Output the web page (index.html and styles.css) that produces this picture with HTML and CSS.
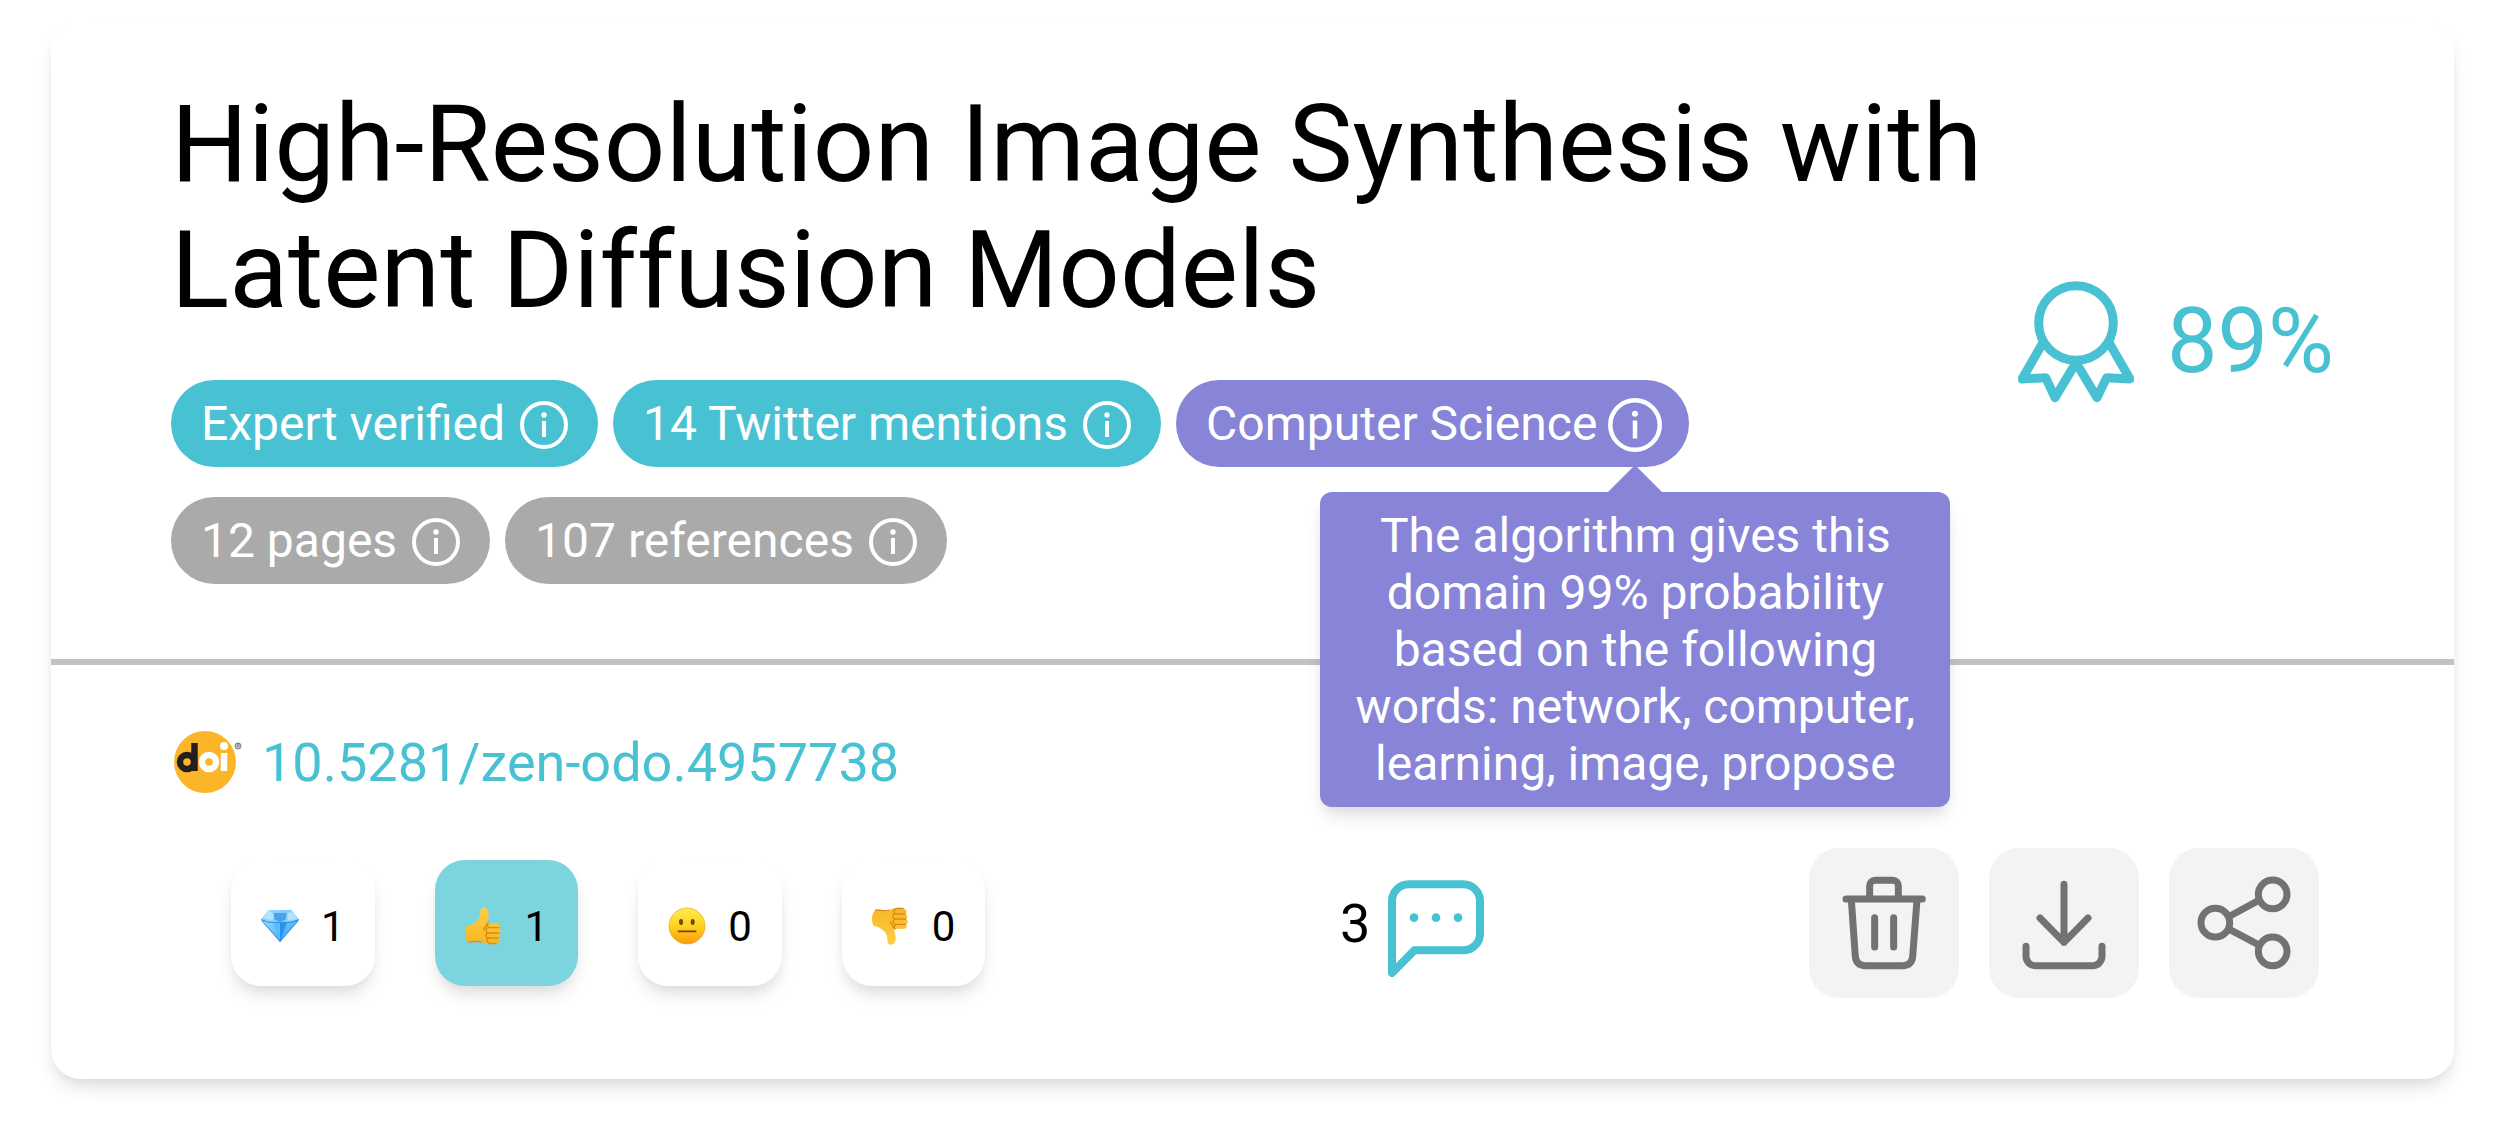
FILE: index.html
```html
<!DOCTYPE html>
<html lang="en">
<head>
<meta charset="utf-8">
<title>High-Resolution Image Synthesis with Latent Diffusion Models</title>
<link rel="stylesheet" href="styles.css">
</head>
<body>
<svg class="defs" aria-hidden="true">
  <defs>
    <linearGradient id="gem" x1="0" y1="0" x2="1" y2="1"><stop offset="0" stop-color="#a5e0ff"/><stop offset=".5" stop-color="#6cc3fb"/><stop offset="1" stop-color="#2a93ec"/></linearGradient>
    <linearGradient id="hand" x1="0" y1="0" x2="0" y2="1"><stop offset="0" stop-color="#ffcf45"/><stop offset="1" stop-color="#f8b526"/></linearGradient>
    <linearGradient id="face" x1="0" y1="0" x2="0" y2="1"><stop offset="0" stop-color="#ffec50"/><stop offset=".5" stop-color="#ffd21f"/><stop offset="1" stop-color="#f99a0e"/></linearGradient>
    <symbol id="info" viewBox="0 0 48 48">
      <circle cx="24" cy="24" r="22" fill="none" stroke="currentColor" stroke-width="4"/>
      <circle cx="24" cy="14" r="2.700" fill="currentColor"/>
      <path d="M24 20V36" stroke="currentColor" stroke-width="4"/>
    </symbol>
  </defs>
</svg>
<article class="card">
  <header class="summary">
    <div class="intro">
      <h1 class="title">High-Resolution Image Synthesis with Latent Diffusion Models</h1>
      <ul class="tags">
        <li class="tag verified">Expert verified <svg class="info"><use href="#info"/></svg></li>
        <li class="tag verified">14 Twitter mentions <svg class="info"><use href="#info"/></svg></li>
        <li class="tag domain">Computer Science
          <span class="hint"><svg class="info active"><use href="#info"/></svg>
            <span class="tooltip" role="tooltip">The algorithm gives this domain 99% probability based on the following words: network, computer, learning, image, propose</span>
          </span>
        </li>
        <li class="tag">12 pages <svg class="info"><use href="#info"/></svg></li>
        <li class="tag">107 references <svg class="info"><use href="#info"/></svg></li>
      </ul>
    </div>
    <div class="score">
      <svg class="award" viewBox="114 114 348 369" fill="none" stroke="currentColor" stroke-width="27" stroke-linecap="round" stroke-linejoin="round">
        <circle cx="288" cy="243" r="112"/>
        <path d="M187 305 126 411 197 407 225 467 288 362 351 467 380 407 450 411 389 305"/>
      </svg>
      <span>89%</span>
    </div>
  </header>
  <div class="details">
    <a class="doi" href="#doi">
      <svg class="doi-logo" viewBox="0 0 70 63">
        <circle cx="31" cy="31" r="31" fill="#fab528"/>
        <g fill="none" stroke-width="6.500">
          <circle cx="13" cy="31" r="7" stroke="#231f20"/><path d="M20.500 12V40" stroke="#231f20"/>
          <circle cx="35" cy="31" r="7" stroke="#fff"/><path d="M50 22V40" stroke="#fff"/>
        </g>
        <circle cx="50" cy="15" r="4" fill="#fff"/>
        <circle cx="64" cy="15" r="3" fill="none" stroke="#555" stroke-width=".8"/>
        <path d="M63 17v-4h1.500a1 1 0 0 1 0 2H63m1.500 0 1 2" fill="none" stroke="#555" stroke-width=".8"/>
      </svg>
      10.5281/zen-odo.4957738
    </a>
    <div class="toolbar">
      <div class="reactions">
        <button class="reaction" aria-label="Brilliant">
          <svg class="emoji" viewBox="0 0 114 114">
            <path d="M23 9H91L114 38 57 106 0 38Z" fill="url(#gem)"/>
            <path d="M23 9 36 18H77L91 9 114 38 78 45H36L0 38Z" fill="#8fd3ff"/>
            <path d="M36 18H77L74 38 57 45 41 38Z" fill="#4aa5e8"/>
            <path d="M36 45H78L57 106Z" fill="#58baff"/><path d="M57 45H78L57 106Z" fill="#2495f2"/>
            <path d="M0 38 24 46H90L114 38" fill="none" stroke="#3290d8" stroke-width="3"/>
            <path d="M3 42 57 103 111 42" fill="none" stroke="#3189cf" stroke-width="3"/>
            <path d="M23 9 8 34 33 40 39 22ZM80 18 98 16 108 35 82 40Z" fill="#b4e4ff"/>
          </svg>1</button>
        <button class="reaction selected" aria-label="Like" aria-pressed="true">
          <svg class="emoji" viewBox="0 0 114 114"><g id="thumb">
            <path d="M4 58C18 55 37 48 45 28L47 7C50-3 66-1 70 12 74 27 66 39 66 49L93 48C106 48 107 60 100 62 110 64 109 76 101 78 109 81 107 91 99 92 107 96 104 104 98 108 83 116 60 111 46 102L10 106C-2 95-2 70 4 58Z" fill="url(#hand)"/>
            <path d="M67 49C64 58 58 60 56 69M101 62H72C65 57 65 51 70 48M102 78H68C61 74 62 65 69 62M99 93H68C60 90 60 82 67 78M70 93C62 98 67 108 75 110H94M12 105C30 105 38 100 50 105" fill="none" stroke="#dc8b12" stroke-width="4" stroke-linecap="round"/>
          </g></svg>1</button>
        <button class="reaction" aria-label="Neutral">
          <svg class="emoji" viewBox="0 0 114 114">
            <circle cx="57" cy="57" r="54" fill="url(#face)" stroke="#eda016" stroke-width="2"/>
            <ellipse cx="39" cy="45" rx="6" ry="9" fill="#764506"/><ellipse cx="74" cy="45" rx="6" ry="9" fill="#764506"/>
            <path d="M31 73H83" stroke="#764506" stroke-width="5" stroke-linecap="round"/>
          </svg>0</button>
        <button class="reaction" aria-label="Dislike">
          <svg class="emoji" viewBox="0 0 114 114"><g transform="matrix(1 0 0 -1 0 114)"><use href="#thumb"/></g></svg>0</button>
      </div>
      <button class="comments" aria-label="3 comments">3
        <svg class="bubble" viewBox="258 117 288 291" fill="none" stroke="currentColor" stroke-width="24" stroke-linejoin="round">
          <path d="M270 396V180a50 50 0 0 1 50-50H484a50 50 0 0 1 50 50V278a50 50 0 0 1-50 50H337Z"/>
          <g fill="currentColor" stroke="none"><circle cx="336" cy="230" r="13"/><circle cx="402" cy="230" r="13"/><circle cx="468" cy="230" r="13"/></g>
        </svg>
      </button>
      <div class="actions">
        <button class="action" aria-label="Delete"><svg class="action-icon" viewBox="0 0 450 450">
          <path d="M111 153H340M182 153V113a16 16 0 0 1 16-16H252a16 16 0 0 1 16 16V153M127 155 139 326Q142 353 170 353H280Q308 353 311 326L324 155M197 209V297M254 209V297"/></svg></button>
        <button class="action" aria-label="Download"><svg class="action-icon" viewBox="0 0 450 450">
          <path d="M225 109V283M153 210 225 283 297 210M111 295V325a28 28 0 0 0 28 28H311a28 28 0 0 0 28-28V295"/></svg></button>
        <button class="action" aria-label="Share"><svg class="action-icon" viewBox="0 0 450 450">
          <circle cx="139" cy="224" r="43"/><circle cx="311" cy="139" r="43"/><circle cx="311" cy="310" r="43"/><path d="M183 204 268 158M183 245 268 290"/></svg></button>
      </div>
    </div>
  </div>
</article>
</body>
</html>
```
FILE: styles.css
```css
* { box-sizing: border-box; }

body {
  min-height: 100vh;
  margin: 0;
  padding: 21px 45px 60px 51px;
  background: #fff;
  color: #000;
  font-family: Roboto, "Liberation Sans", sans-serif;
}

button { border: 0; padding: 0; background: none; color: inherit; font: inherit; cursor: pointer; }
svg { display: block; flex: none; }
.defs { position: absolute; width: 0; height: 0; }

.card {
  border-radius: 30px;
  background: #fff;
  box-shadow: 0 12px 18px -3px rgba(0, 0, 0, .1), 0 6px 12px -3px rgba(0, 0, 0, .06);
}

.summary {
  display: flex;
  align-items: center;
  gap: 30px;
  padding: 60px 120px 75px;
  border-bottom: 6px solid #c2c2c2;
}

.intro { flex: 1; }
.title { margin: 0 0 47px; font-size: 108px; font-weight: 400; line-height: 126px; }

.tags { display: flex; flex-wrap: wrap; gap: 30px 15px; margin: 0; padding: 0; list-style: none; }
.tag {
  display: flex;
  align-items: center;
  gap: 15px;
  height: 87px;
  padding: 0 30px;
  border-radius: 45px;
  background: #aaa;
  color: #fff;
  font-size: 48px;
  line-height: 57px;
}
.verified { background: #48c2d2; }
.domain { background: #8884d8; gap: 11px; padding-right: 27px; }
.info { width: 48px; height: 48px; margin-top: 2px; }
.active { width: 54px; height: 54px; }

.hint { position: relative; }
.tooltip {
  position: absolute;
  top: 96px;
  left: 50%;
  z-index: 1;
  width: 630px;
  padding: 15px 30px;
  border-radius: 12px;
  background: #8884d8;
  box-shadow: 0 12px 18px -3px rgba(0, 0, 0, .1), 0 6px 12px -3px rgba(0, 0, 0, .06);
  text-align: center;
  transform: translateX(-50%);
}
.tooltip::before {
  content: "";
  position: absolute;
  bottom: 100%;
  left: 50%;
  border: 27px solid transparent;
  border-top: 0;
  border-bottom-color: #8884d8;
  transform: translateX(-50%);
}

.score { display: flex; align-items: center; gap: 33px; margin-top: 18px; color: #48c2d2; font-size: 90px; line-height: 105px; }
.award { width: 116px; height: 123px; }

.details { padding: 66px 135px 81px 120px; }
.doi {
  display: inline-flex;
  align-items: center;
  gap: 18px;
  margin-bottom: 54px;
  color: #48c2d2;
  font-size: 54px;
  line-height: 63px;
  text-decoration: none;
}
.doi-logo { width: 70px; height: 63px; margin-left: 3px; }

.toolbar { display: flex; align-items: center; justify-content: space-between; padding-left: 60px; }
.reactions { display: flex; gap: 60px; margin-right: 30px; }
.reaction {
  display: flex;
  align-items: center;
  gap: 22px;
  height: 126px;
  padding: 6px 30px 0;
  border-radius: 30px;
  background: #fff;
  box-shadow: 0 12px 18px -3px rgba(0, 0, 0, .1), 0 6px 12px -3px rgba(0, 0, 0, .06);
  font-size: 42px;
}
.selected { background: #7cd5de; }
.emoji { width: 38px; height: 38px; }

.comments { display: flex; align-items: center; gap: 18px; font-size: 54px; line-height: 63px; }
.bubble { width: 96px; height: 97px; margin-top: 10px; color: #48c2d2; }

.actions { display: flex; gap: 30px; }
.action { border-radius: 30px; background: #f3f3f3; color: #727272; }
.action-icon {
  width: 150px;
  height: 150px;
  fill: none;
  stroke: currentColor;
  stroke-width: 21px;
  stroke-linecap: round;
  stroke-linejoin: round;
}
```
